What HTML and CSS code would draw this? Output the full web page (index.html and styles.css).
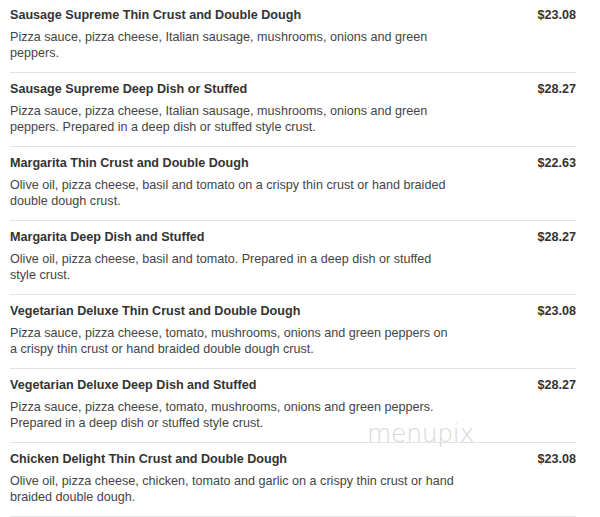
FILE: index.html
```html
<!DOCTYPE html>
<html>
<head>
<meta charset="utf-8">
<link rel="stylesheet" href="styles.css">
</head>
<body>
<div class="menu">
  <div class="item">
    <div class="head"><span class="name">Sausage Supreme Thin Crust and Double Dough</span><span class="price">$23.08</span></div>
    <p class="desc">Pizza sauce, pizza cheese, Italian sausage, mushrooms, onions and green peppers.</p>
  </div>
  <div class="item">
    <div class="head"><span class="name">Sausage Supreme Deep Dish or Stuffed</span><span class="price">$28.27</span></div>
    <p class="desc">Pizza sauce, pizza cheese, Italian sausage, mushrooms, onions and green peppers. Prepared in a deep dish or stuffed style crust.</p>
  </div>
  <div class="item">
    <div class="head"><span class="name">Margarita Thin Crust and Double Dough</span><span class="price">$22.63</span></div>
    <p class="desc">Olive oil, pizza cheese, basil and tomato on a crispy thin crust or hand braided double dough crust.</p>
  </div>
  <div class="item">
    <div class="head"><span class="name">Margarita Deep Dish and Stuffed</span><span class="price">$28.27</span></div>
    <p class="desc">Olive oil, pizza cheese, basil and tomato. Prepared in a deep dish or stuffed style crust.</p>
  </div>
  <div class="item">
    <div class="head"><span class="name">Vegetarian Deluxe Thin Crust and Double Dough</span><span class="price">$23.08</span></div>
    <p class="desc">Pizza sauce, pizza cheese, tomato, mushrooms, onions and green peppers on a crispy thin crust or hand braided double dough crust.</p>
  </div>
  <div class="item">
    <div class="head"><span class="name">Vegetarian Deluxe Deep Dish and Stuffed</span><span class="price">$28.27</span></div>
    <p class="desc">Pizza sauce, pizza cheese, tomato, mushrooms, onions and green peppers. Prepared in a deep dish or stuffed style crust.</p>
    <span class="watermark">menupix</span>
  </div>
  <div class="item">
    <div class="head"><span class="name">Chicken Delight Thin Crust and Double Dough</span><span class="price">$23.08</span></div>
    <p class="desc">Olive oil, pizza cheese, chicken, tomato and garlic on a crispy thin crust or hand braided double dough.</p>
  </div>
</div>
</body>
</html>
```
FILE: styles.css
```css
html, body {
  margin: 0;
  padding: 0;
  background: #ffffff;
}
body {
  font-family: "Liberation Sans", Arial, sans-serif;
  font-size: 12.6px;
  color: #333333;
}
.menu {
  margin: -1px 24px 0 10px;
}
.item {
  position: relative;
  padding: 7px 0 11px 0;
  border-bottom: 1px solid #e3e3e3;
}
.head {
  display: flex;
  justify-content: space-between;
  align-items: flex-start;
  line-height: 18px;
  font-weight: bold;
  color: #333333;
}
.price {
  color: #333333;
}
.desc {
  margin: 5px 0 0 0;
  max-width: 446px;
  line-height: 16px;
  color: #444444;
}
.watermark {
  position: absolute;
  left: 357px;
  top: 50px;
  font-family: "DejaVu Sans", sans-serif;
  font-weight: 200;
  font-size: 25px;
  letter-spacing: -0.3px;
  color: #d8d8d8;
}
```
